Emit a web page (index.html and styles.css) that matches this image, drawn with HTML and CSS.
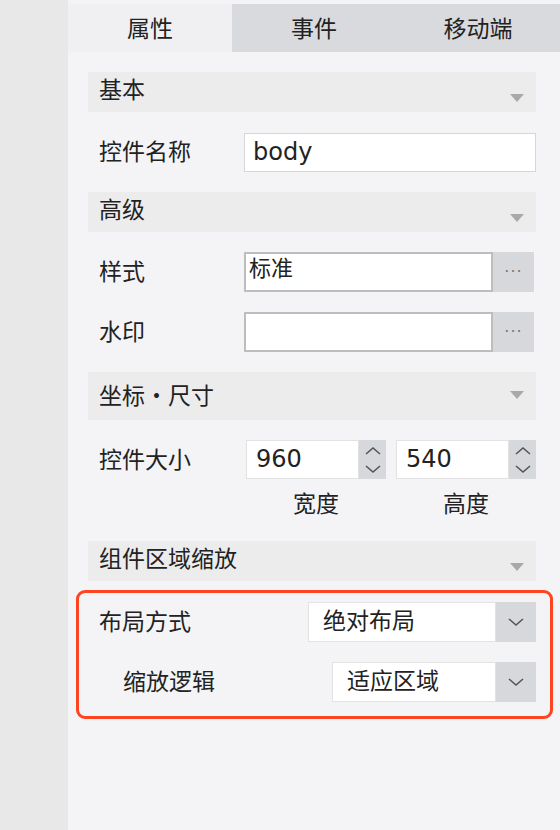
FILE: index.html
```html
<!DOCTYPE html>
<html lang="zh-CN">
<head>
<meta charset="UTF-8">
<title>属性面板</title>
<link rel="stylesheet" href="styles.css">
</head>
<body>
    <div class="side"></div>
    <div class="panel">
        <div class="tabs">
            <div class="tab active">属性</div>
            <div class="tab">事件</div>
            <div class="tab">移动端</div>
        </div>

        <div class="content">
            <div class="section">基本<span class="caret"></span></div>
            <div class="row">
                <span class="label">控件名称</span>
                <div class="input">body</div>
            </div>

            <div class="section">高级<span class="caret"></span></div>
            <div class="row">
                <span class="label">样式</span>
                <div class="picker">
                    <div class="picker-box">标准</div>
                    <div class="picker-btn">···</div>
                </div>
            </div>
            <div class="row">
                <span class="label">水印</span>
                <div class="picker">
                    <div class="picker-box"></div>
                    <div class="picker-btn">···</div>
                </div>
            </div>

            <div class="section tall">坐标・尺寸<span class="caret"></span></div>
            <div class="size-row">
                <span class="label">控件大小</span>
                <div class="number">
                    <div class="number-box">960</div>
                    <div class="spin">
                        <svg width="16" height="28" viewBox="0 0 16 28"><path d="M1 8 L8 2 L15 8" /><path d="M1 20 L8 26 L15 20" /></svg>
                    </div>
                </div>
                <div class="number">
                    <div class="number-box">540</div>
                    <div class="spin">
                        <svg width="16" height="28" viewBox="0 0 16 28"><path d="M1 8 L8 2 L15 8" /><path d="M1 20 L8 26 L15 20" /></svg>
                    </div>
                </div>
                <span></span>
                <span class="caption">宽度</span>
                <span class="caption">高度</span>
            </div>

            <div class="section">组件区域缩放<span class="caret"></span></div>
            <div class="highlight">
                <div class="select-row">
                    <span class="label">布局方式</span>
                    <div class="select">
                        <div class="select-box">绝对布局</div>
                        <div class="select-btn"><svg width="16" height="10" viewBox="0 0 16 10"><path d="M1 2 L8 8 L15 2" /></svg></div>
                    </div>
                </div>
                <div class="select-row sub">
                    <span class="label">缩放逻辑</span>
                    <div class="select">
                        <div class="select-box">适应区域</div>
                        <div class="select-btn"><svg width="16" height="10" viewBox="0 0 16 10"><path d="M1 2 L8 8 L15 2" /></svg></div>
                    </div>
                </div>
            </div>
        </div>
    </div>
</body>
</html>
```

FILE: styles.css
```css
body {
    margin: 0;
    padding: 0;
    width: 560px;
    height: 830px;
    display: flex;
    overflow: hidden;
    font-family: "DejaVu Sans", "Noto Sans CJK SC", sans-serif;
    font-size: 24px;
    color: #222;
    background-color: #f4f4f6;
}

.side {
    width: 68px;
    flex: none;
    background-color: #e8e8e8;
}

.panel {
    flex: 1;
    min-width: 0;
    padding-top: 4px;
    background-color: #f4f4f6;
}

/* Tabs in alto */
.tabs {
    display: grid;
    grid-template-columns: repeat(3, 1fr);
    height: 48px;
    background-color: #d9dadd;
}

.tab {
    display: flex;
    align-items: center;
    justify-content: center;
    font-size: 23px;
    padding-bottom: 2px;
}

.tab.active {
    background-color: #f0f0f2;
}

.content {
    display: flex;
    flex-direction: column;
    gap: 20px;
    padding: 20px 24px 0 20px;
}

.section {
    position: relative;
    height: 40px;
    padding-left: 11px;
    line-height: 36px;
    font-size: 23px;
    background-color: #ececed;
}

.section.tall {
    height: 48px;
    line-height: 48px;
}

.caret {
    position: absolute;
    right: 12px;
    bottom: 10px;
    width: 0;
    height: 0;
    border-left: 7px solid transparent;
    border-right: 7px solid transparent;
    border-top: 8px solid #a9a9a9;
}

.section.tall .caret {
    bottom: 21px;
}

.row {
    display: flex;
    align-items: center;
    height: 40px;
    padding-left: 11px;
}

.label {
    width: 145px;
    flex: none;
    font-size: 23px;
    margin-top: -4px;
}

.input {
    flex: 1;
    height: 39px;
    box-sizing: border-box;
    border: 1px solid #d6d6d6;
    background-color: #fff;
    padding-left: 8px;
    line-height: 36px;
}

.picker {
    flex: 1;
    display: flex;
    height: 40px;
    margin-right: 2px;
}

.picker-box {
    flex: 1;
    box-sizing: border-box;
    border: 2px solid #bdbdbd;
    background-color: #fff;
    padding-left: 3px;
    font-size: 22px;
    line-height: 30px;
}

.picker-btn {
    width: 41px;
    background-color: #d7d8db;
    color: #777;
    font-size: 16px;
    letter-spacing: 1px;
    text-align: center;
    line-height: 40px;
}

/* Riga dimensioni */
.size-row {
    display: grid;
    grid-template-columns: 147px 150px 140px;
    padding-left: 11px;
    margin-bottom: -1px;
}

.size-row .label {
    line-height: 40px;
    margin-top: 0;
}

.number {
    display: flex;
    width: 140px;
    height: 39px;
}

.number-box {
    flex: 1;
    box-sizing: border-box;
    border: 1px solid #e2e2e2;
    background-color: #fff;
    padding-left: 9px;
    line-height: 37px;
}

.spin {
    width: 27px;
    display: flex;
    align-items: center;
    justify-content: center;
    background-color: #d7d8db;
}

.spin path,
.select-btn path {
    fill: none;
    stroke: #555;
    stroke-width: 1.6;
}

.caption {
    width: 140px;
    text-align: center;
    font-size: 23px;
    line-height: 36px;
    margin-top: 6px;
}

/* Riquadro evidenziato */
.highlight {
    display: flex;
    flex-direction: column;
    gap: 20px;
    margin: -11px -17px 0 -12px;
    padding: 9px 14px 14px 9px;
    border: 3px solid #ff4422;
    border-radius: 9px;
}

.select-row {
    display: flex;
    align-items: center;
    height: 40px;
    padding-left: 11px;
}

.select-row .label {
    width: 209px;
}

.select-row.sub {
    padding-left: 35px;
}

.select {
    flex: 1;
    display: flex;
    height: 40px;
}

.select-box {
    flex: 1;
    box-sizing: border-box;
    border: 1px solid #e2e2e2;
    background-color: #fff;
    padding-left: 14px;
    font-size: 23px;
    line-height: 36px;
}

.select-btn {
    width: 40px;
    display: flex;
    align-items: center;
    justify-content: center;
    background-color: #d7d8db;
}
```
